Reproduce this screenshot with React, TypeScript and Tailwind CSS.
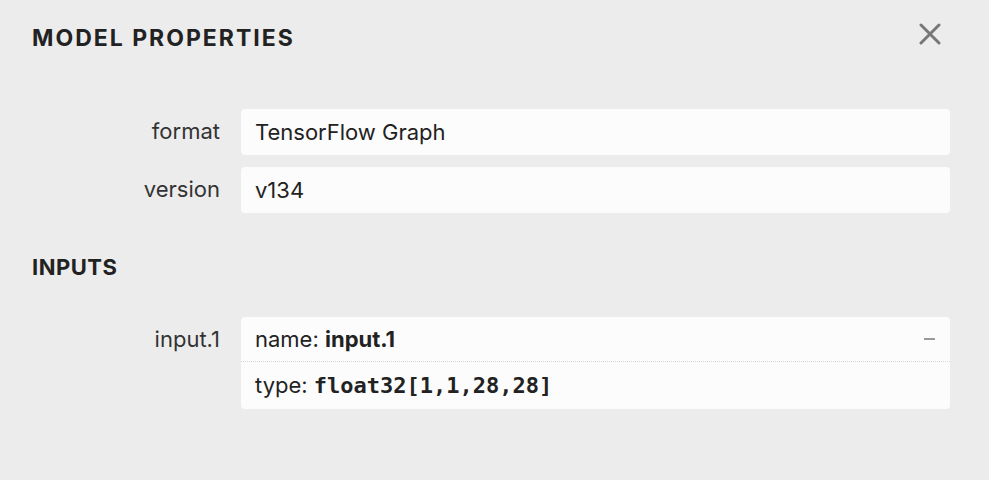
import React from "react"

const SANS = "font-['Inter','Noto_Sans',sans-serif]"
const MONO = "font-['DejaVu_Sans_Mono',monospace]"

function Row({ label, children }: { label: string; children: React.ReactNode }) {
  return (
    <div className="flex items-start">
      <div className="w-[221px] shrink-0 pr-[1px] h-[45px] flex items-center justify-end text-[22px] text-[#333]">{label}</div>
      <div className="ml-[20px] flex-1">{children}</div>
    </div>
  )
}

export default function App() {
  return (
    <div className={`w-[989px] h-[480px] bg-[#ececec] text-[#222] ${SANS} overflow-hidden`}>
      <div className="flex items-start justify-between pl-[32px] pr-[48px] pt-[22px]">
        <h1 className="text-[23px] leading-[32px] font-bold tracking-[2px] text-[#222]">MODEL PROPERTIES</h1>
        <button className="mt-[1px] text-[#777]">
          <svg width="22" height="22" viewBox="0 0 22 22">
            <path d="M2 2 L20 20 M20 2 L2 20" stroke="#777" strokeWidth="3" strokeLinecap="round" />
          </svg>
        </button>
      </div>

      <div className="mt-[55px] pr-[39px] flex flex-col gap-[12px]">
        <Row label="format">
          <div className="h-[46px] rounded-[4px] bg-[#fcfcfc] px-[14px] flex items-center text-[22px] text-[#222]">
            TensorFlow Graph
          </div>
        </Row>
        <Row label="version">
          <div className="h-[46px] rounded-[4px] bg-[#fcfcfc] px-[14px] flex items-center text-[22px] text-[#222]">
            v134
          </div>
        </Row>
      </div>

      <h2 className="pl-[32px] mt-[38px] text-[22px] leading-[32px] font-bold tracking-[0.5px] text-[#222]">INPUTS</h2>

      <div className="mt-[34px] pr-[39px]">
        <Row label="input.1">
          <div className="rounded-[4px] bg-[#fcfcfc]">
            <div className="h-[45px] px-[14px] flex items-center justify-between border-b border-dotted border-[#d8d8d8]">
              <span className="text-[22px]">
                name: <b className="font-bold">input.1</b>
              </span>
              <span className="block w-[11px] h-[1.5px] bg-[#999] mr-[1px]" />
            </div>
            <div className="h-[47px] px-[14px] flex items-center text-[22px]">
              type:&nbsp;<b className={`${MONO} font-bold text-[22px]`}>float32[1,1,28,28]</b>
            </div>
          </div>
        </Row>
      </div>
    </div>
  )
}
